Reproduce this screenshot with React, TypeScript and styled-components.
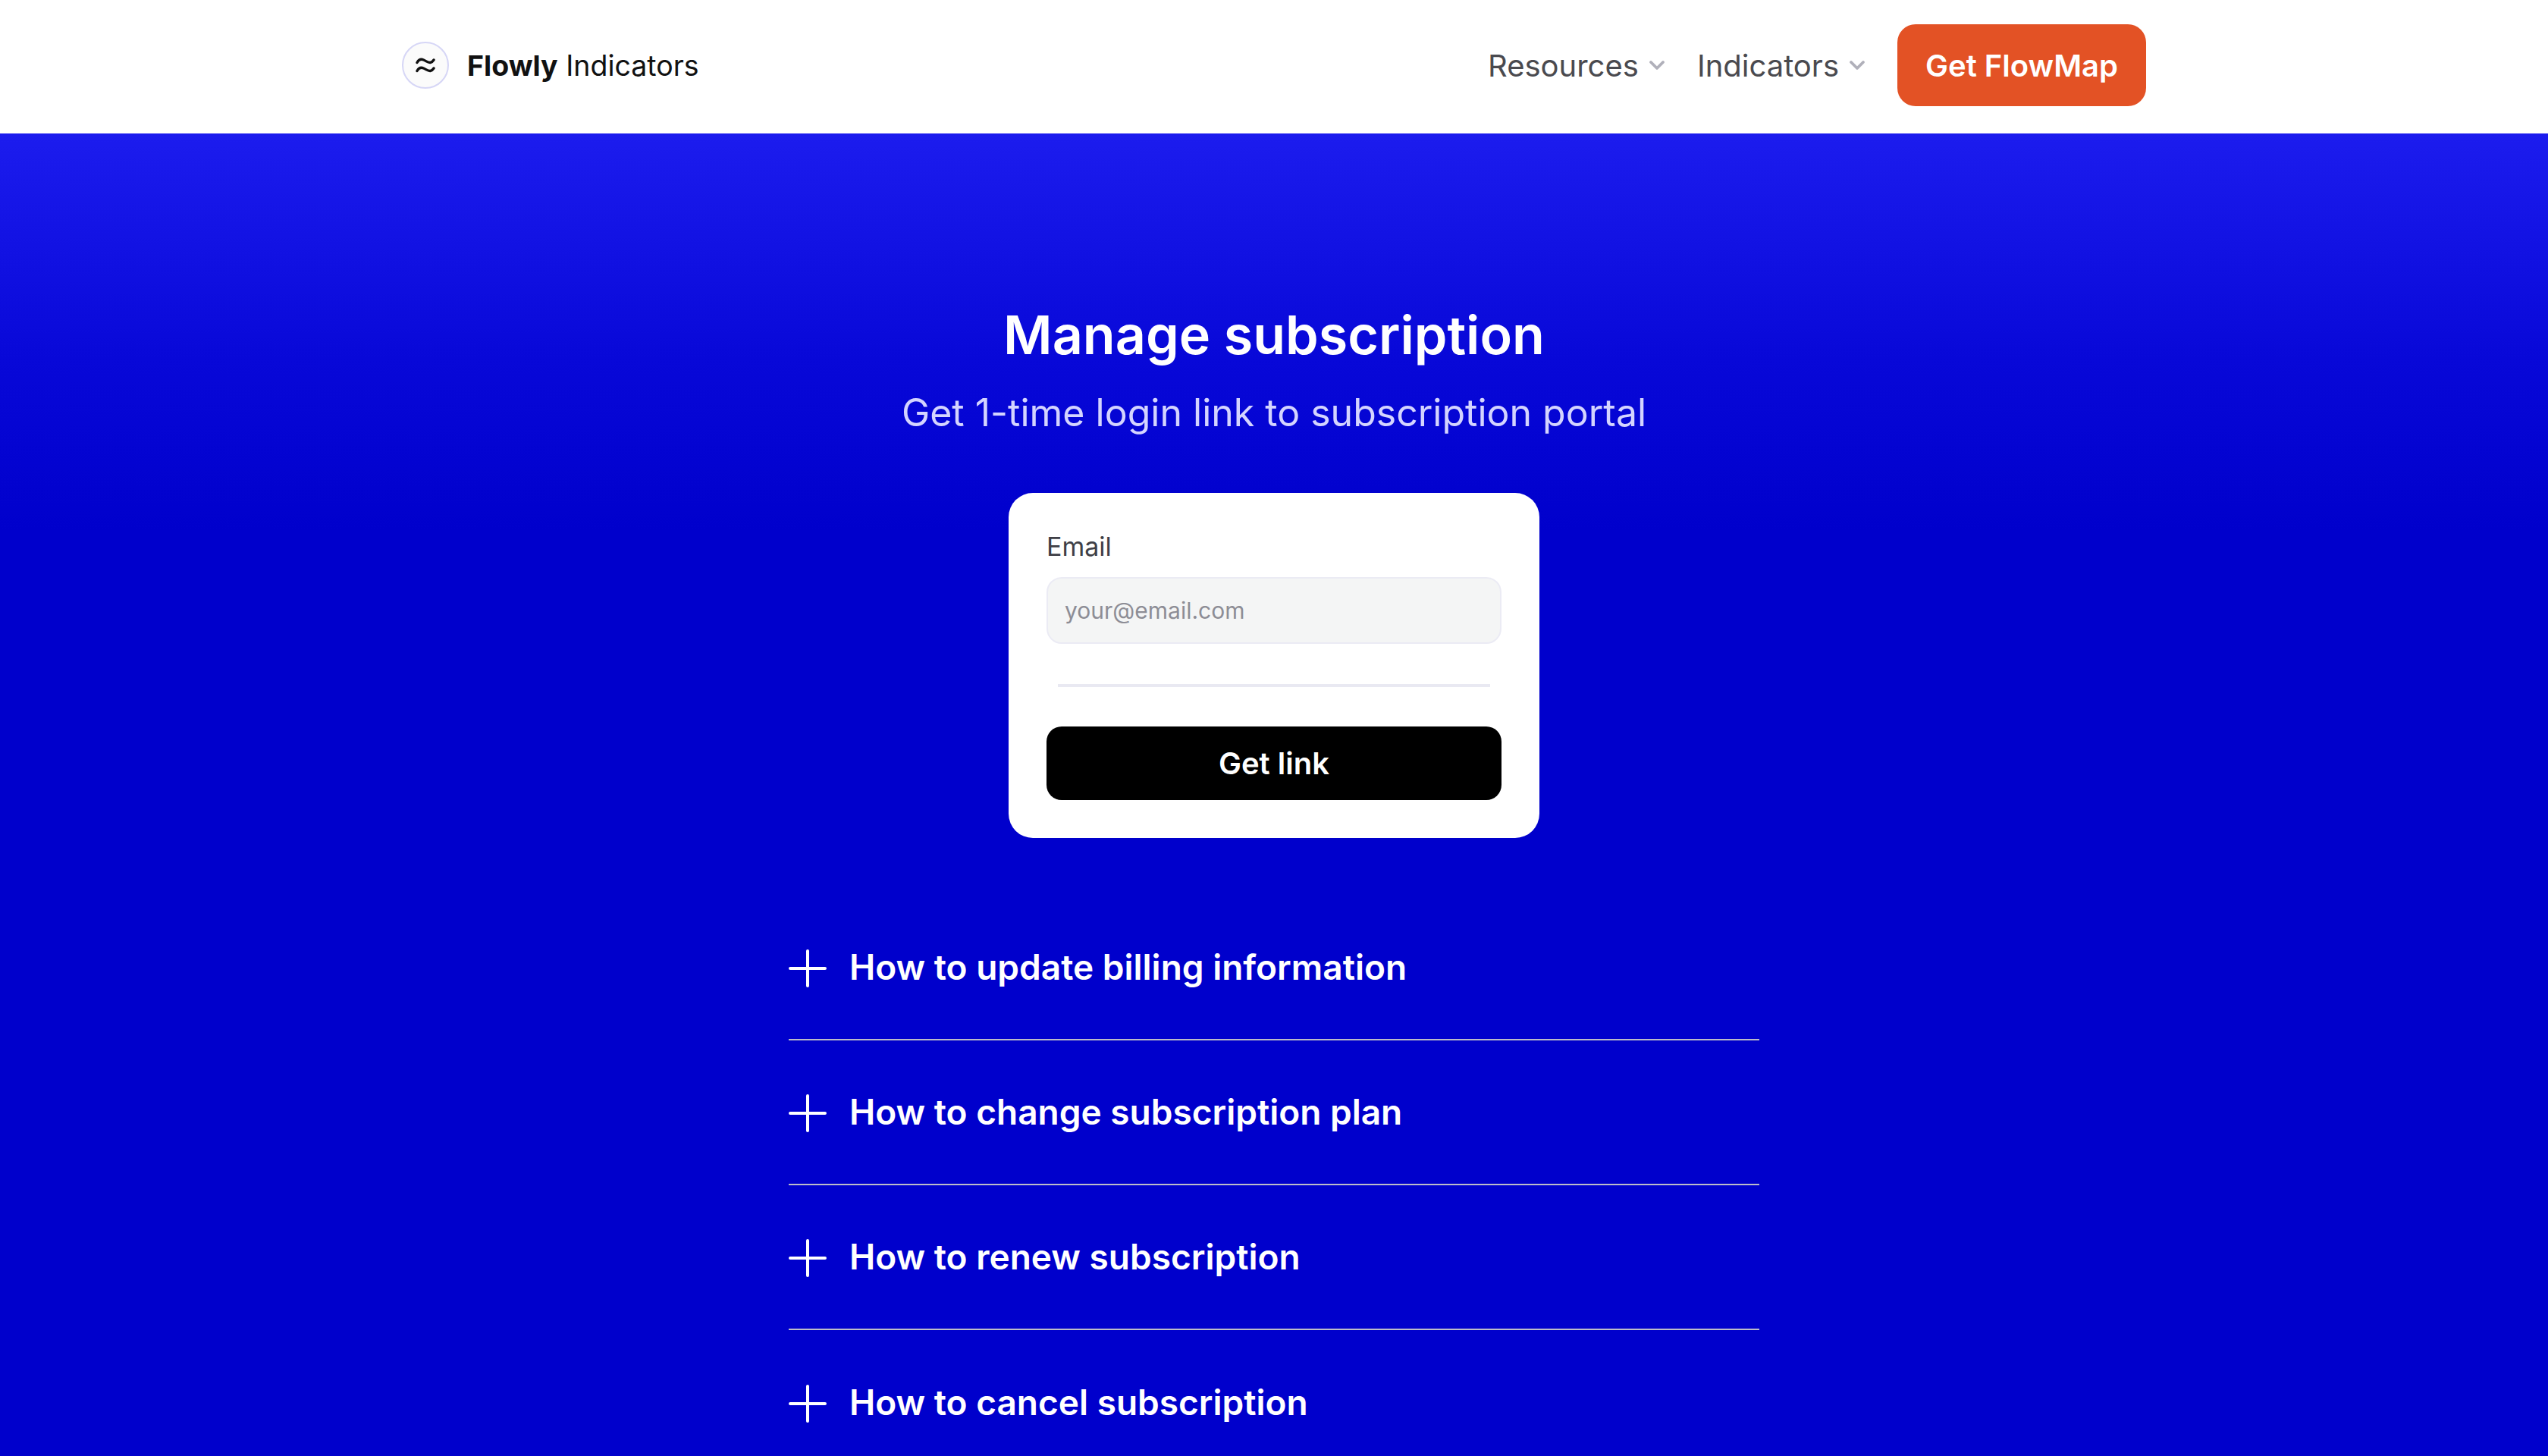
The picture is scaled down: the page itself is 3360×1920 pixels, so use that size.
import * as React from "react";
import styled, { createGlobalStyle } from "styled-components";
import { ChevronDown } from "lucide-react";

const faqs = [
  "How to update billing information",
  "How to change subscription plan",
  "How to renew subscription",
  "How to cancel subscription",
];

const App: React.FC = () => (
  <Page>
    <GlobalStyle />
    <Nav>
      <Brand>
        <LogoMark>
          <svg width="26" height="22" viewBox="0 0 26 22" fill="none" stroke="#111" strokeWidth="3.4" strokeLinecap="round">
            <path d="M2 7.5C4 4 7 2.5 10.5 4s6 4 9 3.5c2-.3 3.5-2 4.5-3.5" />
            <path d="M2 18.5c2-3.5 5-5 8.5-3.5s6 4 9 3.5c2-.3 3.5-2 4.5-3.5" />
          </svg>
        </LogoMark>
        <BrandText>
          <strong>Flowly</strong> Indicators
        </BrandText>
      </Brand>
      <NavLinks>
        <NavLink>
          Resources <ChevronDown size={32} strokeWidth={2.9} color="#b0b0ba" />
        </NavLink>
        <NavLink>
          Indicators <ChevronDown size={32} strokeWidth={2.9} color="#b0b0ba" />
        </NavLink>
        <CtaButton>Get FlowMap</CtaButton>
      </NavLinks>
    </Nav>
    <Hero>
      <Title>Manage subscription</Title>
      <Subtitle>Get 1-time login link to subscription portal</Subtitle>
      <Card>
        <Label>Email</Label>
        <EmailInput placeholder="your@email.com" readOnly />
        <Divider />
        <SubmitButton>Get link</SubmitButton>
      </Card>
      <FaqList>
        {faqs.map((q) => (
          <FaqRow key={q}>
            <PlusIcon viewBox="0 0 50 50">
              <path d="M25 2v46M2 25h46" />
            </PlusIcon>
            <FaqText>{q}</FaqText>
          </FaqRow>
        ))}
      </FaqList>
    </Hero>
  </Page>
);

export default App;

const GlobalStyle = createGlobalStyle`
  html, body {
    margin: 0;
    height: 100%;
    overflow: hidden;
    background: #0000cc;
  }
  body {
    font-family: Inter, "Liberation Sans", sans-serif;
  }
`;

const Page = styled.div`
  height: 1920px;
  overflow: hidden;
`;

const Nav = styled.header`
  height: 176px;
  box-sizing: border-box;
  padding: 0 530px 4px;
  background: #fff;
  display: flex;
  align-items: center;
  justify-content: space-between;
`;

const Brand = styled.div`
  display: flex;
  align-items: center;
  gap: 24px;
`;

const LogoMark = styled.div`
  width: 62px;
  height: 62px;
  box-sizing: border-box;
  border: 2px solid #d6d6f6;
  border-radius: 50%;
  background: #fbfbfb;
  display: flex;
  align-items: center;
  justify-content: center;
`;

const BrandText = styled.span`
  font-size: 37.5px;
  color: #111;
  strong {
    font-weight: 700;
  }
`;

const NavLinks = styled.nav`
  display: flex;
  align-items: center;
`;

const NavLink = styled.a`
  display: flex;
  align-items: center;
  gap: 8px;
  margin-right: 37px;
  font-size: 40px;
  color: #4a4a4f;
`;

const CtaButton = styled.button`
  width: 328px;
  height: 108px;
  border: 0;
  border-radius: 24px;
  background: #e35225;
  color: #fff;
  font-family: inherit;
  font-size: 40px;
  font-weight: 600;
`;

const Hero = styled.main`
  height: 1744px;
  background: linear-gradient(180deg, #1c1cee 0%, #0808d8 17%, #0000cc 30%);
  display: flex;
  flex-direction: column;
  align-items: center;
  padding-top: 220px;
  box-sizing: border-box;
`;

const Title = styled.h1`
  margin: 0;
  font-size: 70px;
  line-height: 92px;
  font-weight: 600;
  color: #fff;
`;

const Subtitle = styled.p`
  margin: 16px 0 0;
  font-size: 50px;
  line-height: 80px;
  color: #d4d4ff;
`;

const Card = styled.form`
  width: 700px;
  height: 455px;
  box-sizing: border-box;
  margin-top: 66px;
  padding: 49px 50px 50px;
  border-radius: 32px;
  background: #fff;
  display: flex;
  flex-direction: column;
`;

const Label = styled.label`
  font-size: 34px;
  line-height: 44px;
  font-weight: 400;
  color: #3f3f46;
  margin-bottom: 18px;
`;

const EmailInput = styled.input`
  height: 88px;
  box-sizing: border-box;
  padding: 0 22px;
  border: 2px solid #ebebf4;
  border-radius: 20px;
  background: #f4f5f5;
  font-family: inherit;
  font-size: 30px;
  &::placeholder {
    color: #8d8d95;
  }
`;

const Divider = styled.hr`
  width: 570px;
  height: 4px;
  margin: 53px auto 52px;
  border: 0;
  background: #e9e9f2;
`;

const SubmitButton = styled.button`
  height: 98px;
  border: 0;
  border-radius: 20px;
  background: #000;
  color: #fff;
  font-family: inherit;
  font-size: 40px;
  font-weight: 600;
`;

const FaqList = styled.div`
  width: 1280px;
  margin-top: 76px;
`;

const FaqRow = styled.div`
  height: 191px;
  box-sizing: border-box;
  display: flex;
  align-items: center;
  gap: 30px;
  padding-bottom: 2px;
  border-bottom: 2px solid #bcbcc8;
  &:last-child {
    border-bottom: 0;
  }
`;

const PlusIcon = styled.svg`
  width: 50px;
  height: 50px;
  margin-top: 4px;
  stroke: #fff;
  stroke-width: 4;
  stroke-linecap: round;
`;

const FaqText = styled.span`
  font-size: 46px;
  font-weight: 600;
  color: #fff;
`;
